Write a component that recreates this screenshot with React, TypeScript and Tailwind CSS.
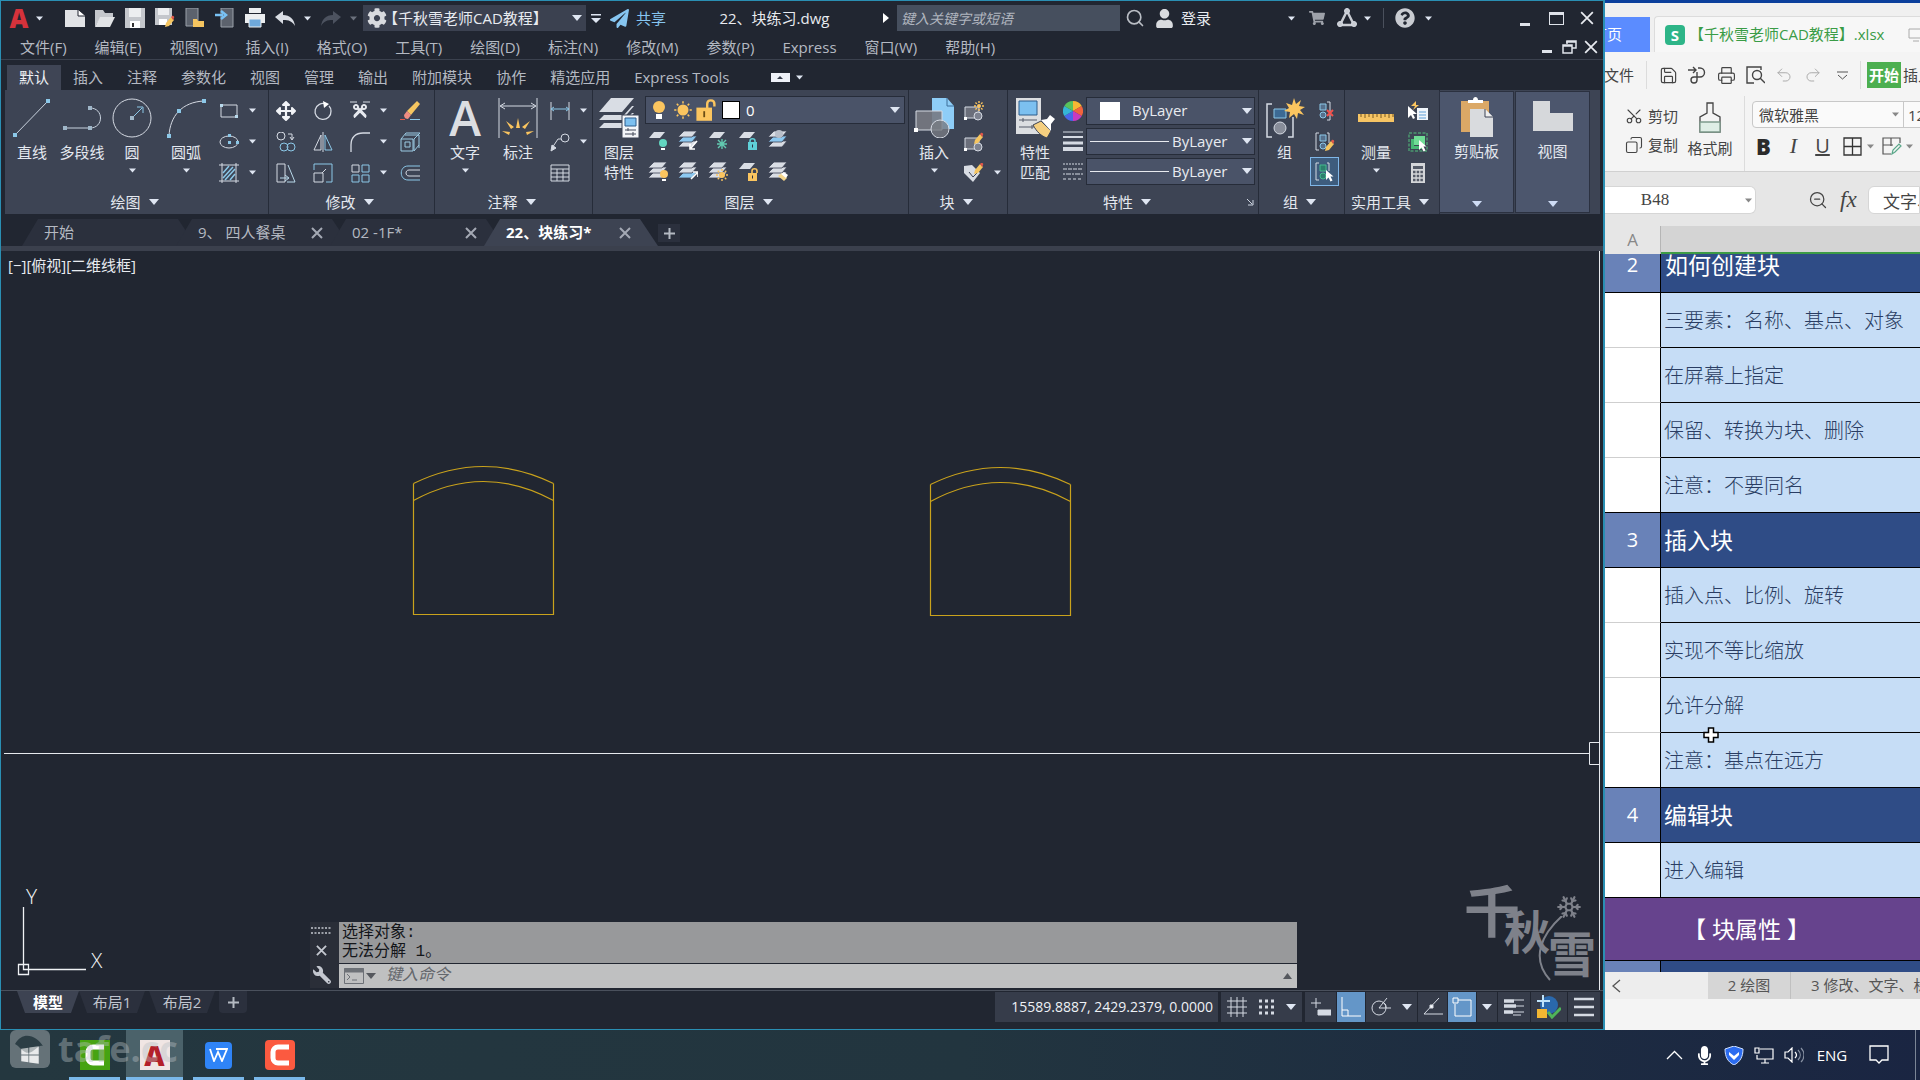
import React from 'react';
import {
  FaCog,
  FaUser,
  FaPaperPlane,
  FaQuestionCircle,
  FaWindows,
  FaShoppingCart,
  FaWrench,
  FaMicrophone,
  FaArrowsAlt,
  FaCut,
} from 'react-icons/fa';
import { Scissors, Copy, Undo2, Redo2, Search, ZoomOut, Snowflake, Printer, Save } from 'lucide-react';

interface IconProps {
  size?: number;
  box?: number;
  children: React.ReactNode;
}

const Icon: React.FC<IconProps> = ({ size = 20, box = 20, children }) => (
  <svg width={size} height={size} viewBox={`0 0 ${box} ${box}`} fill="none" stroke="#d5dae3" strokeWidth={1} aria-hidden="true">
    {children}
  </svg>
);

const Caret: React.FC<{ big?: boolean; color?: string }> = ({ big, color = '#dfe6f2' }) => (
  <svg className="shrink-0" width={big ? 10 : 7} height={big ? 6 : 5} viewBox="0 0 10 6" aria-hidden="true">
    <path d="M0 0h10L5 6z" fill={color} />
  </svg>
);

const Cross: React.FC<{ size?: number; color?: string; width?: number }> = ({ size = 12, color = '#a4a9b4', width = 2 }) => (
  <svg width={size} height={size} viewBox="0 0 12 12" aria-hidden="true">
    <path d="M1 1l10 10M11 1L1 11" stroke={color} strokeWidth={width} />
  </svg>
);

const Pencil = () => (
  <g stroke="none">
    <path d="M10 19l1-4 5-6 3 3-5 6z" fill="#f5c560" />
    <path d="M16 9l1-1c1-1 3 1 2 2l-1 2z" fill="#e0574a" />
  </g>
);

const Sun: React.FC<{ x: number; y: number; r: number }> = ({ x, y, r }) => (
  <g transform={`translate(${x} ${y})`}>
    <circle r={r} fill="#fbc55f" stroke="none" />
    {[0, 45, 90, 135, 180, 225, 270, 315].map((a) => (
      <path key={a} d={`M0 ${-r - 1}V${-r - 3}`} transform={`rotate(${a})`} stroke="#fbc55f" strokeWidth={1.4} />
    ))}
  </g>
);

const Lock: React.FC<{ color: string; open?: boolean }> = ({ color, open }) => (
  <g>
    <path d={open ? 'M14 13v-3c0-3 5-3 5 0v2' : 'M12 13v-2c0-3 5-3 5 0v2'} stroke={color} strokeWidth={1.6} />
    <path d="M10 12h9v8h-9z" fill={color} stroke="none" />
    <path d="M14.500 14.500v3" stroke="#2b3140" />
  </g>
);

const Sheet = ({ fill = '#d9dde4' }) => <path d="M1 8l5-6h11l-5 6z" fill={fill} stroke="none" />;

const Sheets: React.FC<{ mid?: string; last?: string }> = ({ mid = '#d9dde4', last = '#d9dde4' }) => (
  <g stroke="#3c4354" strokeWidth={0.8}>
    <path d="M0 17l6-6h13l-5 6z" fill={last} />
    <path d="M0 12l6-6h13l-5 6z" fill={mid} />
    <path d="M0 7l6-6h13l-5 6z" fill="#d9dde4" />
  </g>
);

const Cursor = () => <path d="M11 8v10l2.500-2.500 2 4 2-1-2-4h3z" fill="#fff" stroke="none" />;

const DRAW_SMALL = [
  <Icon key="rect"><path d="M2 4h16v12H2z" /><path d="M1 3h3v3H1zM16 14h3v3h-3z" fill="#b8d9ec" stroke="none" /></Icon>,
  <Icon key="ellipse"><ellipse cx="10" cy="10" rx="9" ry="6" /><path d="M9 9h3v3H9zM9 2h3v3H9zM17 9h3v3h-3z" fill="#8cc8e8" stroke="none" /></Icon>,
  <Icon key="hatch"><path d="M3 0v20M17 0v20M0 2h20M0 18h20" /><path d="M4 10l6-7M4 15L14 4M6 17L16 6M11 17l5-6" stroke="#8cc8e8" strokeWidth={1.5} /></Icon>,
];

const MODIFY_SMALL = [
  <FaArrowsAlt key="move" size={20} color="#f1f3f7" />,
  <Icon key="rotate"><path d="M13 3a8 8 0 1 0 5 7c0-2-1-4-2-5" strokeWidth={1.3} /><path d="M10 0l6 3-5 4z" fill="#fff" stroke="none" /></Icon>,
  <Icon key="trim"><path d="M0 1h7M13 1h7" /><g transform="translate(18 2) rotate(90)"><FaCut size={16} color="#e6e9ef" /></g></Icon>,
  <Icon key="erase"><path d="M0 18.500h5" stroke="#e0574a" /><path d="M10 18.500h10" stroke="#8cc8e8" /><path d="M7 10L17 0l3 3-9 11z" fill="#f5c560" stroke="none" /><path d="M7 10l4 4-3 4c-2 0-4-1-4-4z" fill="#f08d82" stroke="none" /></Icon>,
  <Icon key="copy"><circle cx="5" cy="4" r="4" /><path d="M12 2h4v5M14 5l2 3 2-3" /><circle cx="8" cy="15" r="4" stroke="#8cc8e8" /><circle cx="15" cy="15" r="4" stroke="#8cc8e8" /></Icon>,
  <Icon key="mirror"><path d="M8 3v15H1zM10 0v20" /><path d="M12 3v15h7z" stroke="#8cc8e8" /></Icon>,
  <Icon key="fillet"><path d="M1 20v-7C1 5 6 1 13 1h7" strokeWidth={1.3} /></Icon>,
  <Icon key="explode"><path d="M1 7h12v12H1zM5 3h14v13M1 7l5-6h14l-6 6M14 7v12l5-6M5 10h5v5H5z" stroke="#9ccbe4" /></Icon>,
  <Icon key="stretch"><path d="M1 1h8v18H1z" /><path d="M12 2l7 17h-8M4 15h8M9 12l4 3-4 3" stroke="#b9d9ea" /></Icon>,
  <Icon key="scale"><path d="M1 10h9v9H1z" /><path d="M1 7V1h18v18h-6" stroke="#8cc8e8" /><path d="M9 10l4-4" /></Icon>,
  <Icon key="array"><path d="M2 2h7v7H2z" /><path d="M12 2h7v7h-7zM2 12h7v7H2zM12 12h7v7h-7z" stroke="#8cc8e8" /></Icon>,
  <Icon key="offset"><path d="M20 3H8c-9 0-9 14 0 14h12" stroke="#8cc8e8" /><path d="M20 7H9c-4 0-4 6 0 6h11" /></Icon>,
];

const ANNOTATE_SMALL = [
  <Icon key="linear"><path d="M1 1v18M19 1v18" /><path d="M1 8h18M4 6L1 8l3 2M16 6l3 2-3 2" stroke="#8cc8e8" /></Icon>,
  <Icon key="leader"><circle cx="15" cy="6" r="4" /><path d="M11 7H8l-6 9" /><path d="M1 19l1-6 4 3z" fill="#d5dae3" /></Icon>,
  <Icon key="table"><path d="M1 2h18v16H1zM1 6h18M1 10h18M1 14h18M7 6v12M13 6v12" /></Icon>,
];

const LAYER_SMALL = [
  <Icon key="off"><Sheet /><circle cx="15" cy="13" r="4" fill="#62d5c0" stroke="none" /><path d="M13 18h4v2h-4z" fill="#fff" stroke="none" /></Icon>,
  <Icon key="isolate"><Sheets mid="#8cc8f0" last="#d9dde4" /><path d="M19 11l-6 7M12 14v5h5" stroke="#fff" strokeWidth={1.6} /></Icon>,
  <Icon key="freeze"><Sheet /><path d="M14 9v10M9 14h10M10 10l8 8M18 10l-8 8" stroke="#62c9b0" strokeWidth={1.4} /></Icon>,
  <Icon key="lock"><Sheet /><Lock color="#5fd0d8" /></Icon>,
  <Icon key="current"><Sheets mid="#8cc8f0" /><circle cx="11" cy="4" r="4" fill="#b9bfca" stroke="none" /></Icon>,
  <Icon key="on"><Sheets /><circle cx="16" cy="13" r="4" fill="#fbc55f" stroke="none" /><path d="M14 18h4v2h-4z" fill="#fff" stroke="none" /></Icon>,
  <Icon key="unisolate"><Sheets mid="#d9dde4" last="#8cc8f0" /><path d="M13 18l6-6M15 11h5v5" stroke="#fff" strokeWidth={1.6} /></Icon>,
  <Icon key="thaw"><Sheets /><Sun x={14} y={14} r={3} /></Icon>,
  <Icon key="unlock"><Sheet /><Lock color="#fbc55f" open /></Icon>,
  <Icon key="match"><Sheets /><path d="M10 15l4-3 5 5-3 3z" fill="#f5d58a" stroke="none" /><path d="M13 13l3-2 4 3-2 3z" fill="#fff" stroke="none" /></Icon>,
];

const BlockBase = () => (
  <g>
    <path d="M1 6h14v11H1z" fill="#6b6f7b" />
    <circle cx="14" cy="15" r="4" fill="#7d8290" />
    <path d="M0 16h3v3H0z" fill="#fff" stroke="none" />
  </g>
);

const BLOCK_SMALL = [
  <Icon key="create"><BlockBase /><Sun x={15} y={5} r={2} /></Icon>,
  <Icon key="edit"><BlockBase /><g transform="translate(0 -7)"><Pencil /></g></Icon>,
  <Icon key="attr"><path d="M0 3l8-1 8 8-7 9-9-9z" fill="#d9dde4" stroke="none" /><path d="M5 9l4 5 4-4" stroke="#3c4354" /><g transform="translate(0 -8)"><Pencil /></g></Icon>,
];

const GroupBase = ({ fill = '#56708c', line = '#8cc8e8' }) => (
  <g>
    <path d="M5 3h6v6H5z" fill={fill} stroke={line} />
    <circle cx="8" cy="14" r="3" fill={fill} stroke={line} />
  </g>
);

const GROUP_SMALL = [
  <Icon key="ungroup"><GroupBase /><path d="M12 1h3v18h-3" /><path d="M12 9l6 6M18 9l-6 6" stroke="#f0524d" strokeWidth={2} /></Icon>,
  <Icon key="edit"><path d="M4 1H1v17h3M12 1h2v10" /><GroupBase /><Pencil /></Icon>,
  <Icon key="select"><path d="M4 1H1v17h3M12 1h2v8" /><GroupBase fill="#2c7f6d" line="#45b98f" /><Cursor /></Icon>,
];

const UTIL_SMALL = [
  <Icon key="quick"><path d="M9 7h11v12H9z" fill="#f1f6fb" stroke="none" /><path d="M11 11h7M11 14h7M11 17h7" stroke="#5d9fd8" /><path d="M0 5v12l3-3 2 4 2-1-2-4h4z" fill="#fff" stroke="none" /><path d="M8 0L3 5h4L5 9l6-5H8z" fill="#fbc55f" stroke="none" /></Icon>,
  <Icon key="all"><path d="M1 1h18v18H1z" stroke="#52c27d" strokeDasharray="3 1.500" /><path d="M6 4h11v9H6z" fill="#6fdc95" stroke="none" /><path d="M3 7h3v7h8v3H3z" fill="#48b874" stroke="none" /><Cursor /></Icon>,
  <Icon key="calc"><path d="M3 0h14v20H3z" fill="#d4d6d9" stroke="none" /><path d="M5 3h10v3H5z" fill="#555b68" stroke="none" /><path d="M5 9h10M5 13h10M5 17h10" stroke="#555b68" strokeWidth={2.5} strokeDasharray="2.500 1.200" /></Icon>,
];

const LineIcon = () => (
  <Icon size={40} box={40}><path d="M3 37L36 3" stroke="#c9d3df" /><path d="M1 35h4v4H1zM34 1h4v4h-4z" fill="#8cc8e8" stroke="none" /></Icon>
);
const PolylineIcon = () => (
  <Icon size={40} box={40}><path d="M3 30h25c14 0 14-20 0-20" stroke="#c9d3df" /><path d="M1 28h4v4H1zM26 28h4v4h-4zM26 8h4v4h-4z" fill="#9fb6c8" stroke="none" /></Icon>
);
const CircleIcon = () => (
  <Icon size={40} box={40}><circle cx="20" cy="20" r="19" /><path d="M20 20L30 10M25 9h6v6" stroke="#8cc8e8" /><path d="M18 18h4v4h-4z" fill="#9fb6c8" stroke="none" /></Icon>
);
const ArcIcon = () => (
  <Icon size={40} box={40}><path d="M3 38C4 18 16 4 38 3" /><path d="M1 36h4v4H1zM11 11h4v4h-4zM36 1h4v4h-4z" fill="#8cc8e8" stroke="none" /></Icon>
);
const DimIcon = () => (
  <Icon size={40} box={40}>
    <path d="M1 0v40M39 0v40M3 8h34M7 5L2 8l5 3M33 5l5 3-5 3" />
    <path d="M18 30l2-10 2 10zM13 31l-5-8 8 6zM27 31l5-8-8 6zM12 34l-8-1 7 4zM28 34l8-1-7 4z" fill="#fbc55f" stroke="none" />
  </Icon>
);
const LayerPropsIcon = () => (
  <Icon size={40} box={40}>
    <g fill="#d9dde4" stroke="none"><path d="M0 14L12 0h23L23 14z" /><path d="M0 22l5-5h20l8-9h2L23 22z" /><path d="M0 30l5-5h19l9-10h2L23 30z" /></g>
    <path d="M23 17h17v23H23z" fill="#f4f6f9" stroke="#3c4354" /><path d="M26 20h11v8H26z" fill="#7cc0f0" stroke="#2c5c8c" /><path d="M26 32h11M26 36h11M29 30v3M34 34v4" stroke="#444b5a" />
  </Icon>
);
const InsertIcon = () => (
  <Icon size={40} box={40}>
    <path d="M18 0h15l7 8v23H18z" fill="#8ecdf7" stroke="none" /><path d="M33 0v8h7" stroke="#3c6f9a" />
    <path d="M2 13h26v19H2z" fill="#777a82" fillOpacity={0.9} /><circle cx="26" cy="31" r="9" fill="#777a82" fillOpacity={0.8} /><path d="M0 30h4v4H0z" fill="#fff" stroke="none" />
  </Icon>
);
const MatchIcon = () => (
  <Icon size={40} box={40}>
    <path d="M1 0h25v36H1z" fill="#dcdee1" stroke="none" /><path d="M4 3h18v14H4z" fill="#7cc0f0" stroke="#2c5c8c" /><path d="M4 22h18M4 29h18M8 20v4M17 27v4" stroke="#555b68" />
    <path d="M18 27l8-4 10 10-4 7c-6-2-10-6-14-13z" fill="#f5cf80" stroke="#3c4354" /><path d="M26 22l6-1 3-4 5 4-4 5v7z" fill="#fff" stroke="none" />
  </Icon>
);
const GroupIcon = () => (
  <Icon size={40} box={40}>
    <path d="M7 6H2v33h5M23 39h5V19" strokeWidth={1.5} /><path d="M9 11h12v9H9z" fill="#3c6a94" stroke="#8cc8e8" /><circle cx="15" cy="30" r="6" fill="#888d99" />
    <path d="M29 0l2 6 5-4-2 6 6 1-5 3 4 5-6-2-1 6-3-5-5 4 1-6-6-1 5-3-3-5 6 2z" fill="#fbc55f" stroke="none" />
  </Icon>
);
const RulerIcon = () => (
  <Icon size={40} box={40}><path d="M2 16h36v8H2z" fill="#f7c564" stroke="none" /><path d="M5 16v3M9 16v4M13 16v3M17 16v4M21 16v3M25 16v4M29 16v3M33 16v4M37 16v3" stroke="#7a5a20" /></Icon>
);
const ClipboardIcon = () => (
  <Icon size={40} box={40}>
    <path d="M4 4h28v31H4z" fill="#dba866" stroke="none" /><path d="M11 5V3h5c0-4 5-4 5 0h5v3H11z" fill="#fff" stroke="none" /><path d="M13 12h15l8 8v20H13z" fill="#d9dbde" stroke="none" /><path d="M28 12v8h8" fill="#eee" stroke="#3c4354" />
  </Icon>
);
const ViewIcon = () => (
  <Icon size={40} box={40}><path d="M0 4h17v12h23v18H0z" fill="#d6d8db" stroke="none" /></Icon>
);

const TextIcon = () => <span className="text-[48px] leading-10 font-semibold text-[#dcdee2]">A</span>;

interface BigButtonProps {
  icon: React.ReactNode;
  lines: string[];
  className: string;
  caret?: boolean;
}

const BigButton: React.FC<BigButtonProps> = ({ icon, lines, className, caret }) => (
  <button className={`flex flex-col items-center pt-2 text-[15px] leading-5 text-[#e4e8ef] ${className}`}>
    <span className="h-10">{icon}</span>
    <span className="mt-1">
      {lines.map((line) => (
        <span key={line} className="block whitespace-nowrap">{line}</span>
      ))}
    </span>
    {caret && <span className="mt-0.5 flex h-3 items-center"><Caret /></span>}
  </button>
);

interface PanelProps {
  title: string;
  className: string;
  launcher?: boolean;
  children: React.ReactNode;
}

const Panel: React.FC<PanelProps> = ({ title, className, launcher, children }) => (
  <section className={`flex flex-col border-r border-[#262c39] ${className}`}>
    <div className="flex h-[100px]">{children}</div>
    <div className="flex h-6 items-center pr-1">
      <button className="flex flex-1 items-center justify-center gap-2 whitespace-nowrap text-[15px] leading-6 text-[#e4e8ef]">
        {title}
        <Caret big />
      </button>
      {launcher && (
        <button aria-label="特性设置">
          <svg width="8" height="8" viewBox="0 0 8 8"><path d="M1 1l5 5M7 2v5H2" stroke="#cfd6e2" fill="none" /></svg>
        </button>
      )}
    </div>
  </section>
);

interface IconGridProps {
  icons: React.ReactNode[];
  label: string;
  carets?: number[];
}

// one column of small tools; carets lists the rows that open a flyout
const IconColumn: React.FC<IconGridProps> = ({ icons, label, carets = [] }) => (
  <div className="flex flex-col pt-[5px]">
    {icons.map((icon, i) => (
      <div key={i} className="flex h-[31px] items-center">
        <button aria-label={`${label} ${i + 1}`} className="flex w-[30px] items-center justify-center">{icon}</button>
        {carets.includes(i) && <span className="flex w-4 justify-center"><Caret /></span>}
      </div>
    ))}
  </div>
);

const MENUS = ['文件(F)', '编辑(E)', '视图(V)', '插入(I)', '格式(O)', '工具(T)', '绘图(D)', '标注(N)', '修改(M)', '参数(P)', 'Express', '窗口(W)', '帮助(H)'];
const RIBBON_TABS = ['默认', '插入', '注释', '参数化', '视图', '管理', '输出', '附加模块', '协作', '精选应用', 'Express Tools'];
const DOC_TABS = ['开始', '9、 四人餐桌', '02 -1F*', '22、块练习*'];

const FileIcons = [
  <Icon key="new"><path d="M0 2h13l7 6v11H0z" fill="#e1e3e6" stroke="none" /><path d="M13 2v6h7" fill="#fff" stroke="#222733" /></Icon>,
  <Icon key="open"><path d="M0 19V2h8l2 3h8v4H6z" fill="#c4c7cc" stroke="none" /><path d="M5 9h15l-5 10H0z" fill="#e1e3e6" stroke="none" /></Icon>,
  <Icon key="save"><path d="M0 0h20v20H0z" fill="#c4c7cc" stroke="none" /><path d="M4 0h12v9H4z" fill="#eceef0" stroke="none" /><path d="M5 13h10v7H5z" fill="#fff" stroke="none" /><path d="M7 15h2v4H7z" fill="#333" stroke="none" /></Icon>,
  <Icon key="saveas"><path d="M0 0h17v17H0z" fill="#c4c7cc" stroke="none" /><path d="M3 0h11v7H3z" fill="#eceef0" stroke="none" /><path d="M4 11h8v6H4z" fill="#fff" stroke="none" /><Pencil /></Icon>,
  <Icon key="web"><path d="M1 0h12v18H1z" fill="#5c626d" stroke="#9aa0aa" /><path d="M8 11h4l1 2h6v6H8z" fill="#f5c560" stroke="none" /></Icon>,
  <Icon key="mobile"><path d="M6 0h12v19H6z" fill="#5c626d" stroke="#9aa0aa" /><path d="M0 7h8M6 3l5 4-5 4" stroke="#79c2f5" strokeWidth={2.5} /></Icon>,
  <Icon key="print"><path d="M4 0h12v5H4zM0 6h20v9H0z" fill="#eceef0" stroke="none" /><path d="M4 11h12v8H4z" fill="#6fa9db" stroke="#eceef0" /></Icon>,
];

const TitleBar = () => (
  <header className="flex h-[34px] items-center text-[15px] text-[#e8ebf0]">
    <button className="ml-1 flex w-7 justify-center text-[26px] leading-7 font-black text-[#d5323b]">A</button>
    <span className="mr-[15px] flex w-3 justify-center"><Caret /></span>
    {FileIcons.map((icon, i) => (
      <button key={i} aria-label={`快速访问 ${i + 1}`} className="flex w-[30px] justify-center">{icon}</button>
    ))}
    <button aria-label="放弃" className="flex w-[30px] justify-center">
      <Icon><path d="M0 9l8-6v4c7 0 11 4 12 11-3-5-6-6-12-6v4z" fill="#d9dde4" stroke="none" /></Icon>
    </button>
    <span className="flex w-[15px] justify-center"><Caret /></span>
    <button aria-label="重做" className="flex w-8 justify-center">
      <Icon><path d="M20 9l-8-6v4C5 7 1 11 0 18c3-5 6-6 12-6v4z" fill="#4c525f" stroke="none" /></Icon>
    </button>
    <span className="mr-1 flex w-3 justify-center"><Caret color="#6b717d" /></span>
    <div className="flex h-[26px] w-[223px] items-center bg-[#3b4150] pl-1 pr-1">
      <FaCog size={20} color="#d9dbdf" />
      <select aria-label="工作空间" className="-ml-1 min-w-0 flex-1 appearance-none bg-transparent outline-none">
        <option>【千秋雪老师CAD教程】</option>
      </select>
      <Caret big />
    </div>
    <button aria-label="自定义" className="flex w-5 justify-center">
      <svg width="10" height="9" viewBox="0 0 10 9"><path d="M0 0h10v1.500H0zM0 4h10L5 9z" fill="#dfe6f2" /></svg>
    </button>
    <button className="flex items-center gap-[7px] whitespace-nowrap pl-1 text-[#86c5f0]">
      <FaPaperPlane size={19} />
      共享
    </button>
    <h1 className="flex-1 whitespace-nowrap text-center">22、块练习.dwg</h1>
    <svg className="mr-2" width="6" height="10" viewBox="0 0 6 10"><path d="M0 0l6 5-6 5z" fill="#fff" /></svg>
    <input aria-label="搜索" placeholder="键入关键字或短语" className="h-[26px] w-[223px] bg-[#464f5e] pl-1 text-[14px] italic outline-none placeholder:text-[#b0b5bf]" />
    <button aria-label="查找" className="flex w-[30px] justify-center"><Search size={20} color="#b9bdc4" /></button>
    <button className="mr-[71px] flex items-center gap-[7px] whitespace-nowrap pl-[5px]">
      <FaUser size={19} color="#d9dbdf" />
      登录
    </button>
    <span className="flex w-[18px] justify-center"><Caret /></span>
    <button aria-label="商店" className="flex w-[34px] justify-center"><FaShoppingCart size={16} color="#9da1a9" /></button>
    <button aria-label="Autodesk" className="flex w-[26px] justify-center">
      <Icon><path d="M10 3l7 14H3z" stroke="#c9ccd2" strokeWidth={2.5} /><circle cx="10" cy="3" r="2.500" fill="#c9ccd2" /><circle cx="3" cy="16" r="2.500" fill="#c9ccd2" /><circle cx="17" cy="16" r="2.500" fill="#c9ccd2" /></Icon>
    </button>
    <span className="flex w-[14px] justify-center"><Caret /></span>
    <span className="mx-[9px] h-5 w-px bg-[#4a505c]" />
    <button aria-label="帮助" className="flex w-6 justify-center"><FaQuestionCircle size={20} color="#c9ccd2" /></button>
    <span className="mr-[70px] flex w-[22px] justify-center"><Caret /></span>
    <button aria-label="最小化" className="flex h-4 w-8 items-end justify-center"><span className="h-[3px] w-[10px] bg-[#dfe3ea]" /></button>
    <button aria-label="最大化" className="flex w-[30px] justify-center"><span className="h-[13px] w-[15px] border border-t-[3px] border-[#dfe3ea]" /></button>
    <button aria-label="关闭" className="flex w-8 justify-center"><Cross size={14} color="#e8ebf0" width={1.5} /></button>
  </header>
);

const MenuBar = () => (
  <nav className="flex h-[25px] items-center border-b border-[#3b414e] pl-[19px] text-[15px] leading-5 text-[#b4b9c2]">
    <div className="flex flex-1 gap-[28px] whitespace-nowrap">
      {MENUS.map((menu) => (
        <button key={menu}>{menu}</button>
      ))}
    </div>
    <button aria-label="最小化图纸" className="flex h-3 w-6 items-end justify-center"><span className="h-[3px] w-[10px] bg-[#dfe3ea]" /></button>
    <button aria-label="还原图纸" className="flex w-5 justify-center">
      <svg width="15" height="14" viewBox="0 0 15 14" fill="none" stroke="#dfe3ea" strokeWidth={1.5}><path d="M5 4V1h9v7h-4M4 2h10" /><path d="M1 5h9v8H1zM1 6h9" /></svg>
    </button>
    <button aria-label="关闭图纸" className="flex w-6 justify-center"><Cross size={14} color="#e8ebf0" width={1.5} /></button>
  </nav>
);

const RibbonTabs = () => (
  <div className="flex h-[30px] items-end pl-[6px] text-[15px] leading-[25px] text-[#b4b9c2]">
    {RIBBON_TABS.map((tab, i) => (
      <button key={tab} className={i === 0 ? 'bg-[#3f4555] px-3 text-[#f0f2f6]' : 'whitespace-nowrap px-3'}>{tab}</button>
    ))}
    <div className="ml-[29px] flex h-[25px] items-center gap-1.5">
      <span className="flex h-[9px] w-[19px] items-center justify-center bg-[#eef1f8]">
        <svg width="6" height="3" viewBox="0 0 6 3"><path d="M0 3h6L3 0z" fill="#333a48" /></svg>
      </span>
      <Caret />
    </div>
  </div>
);

const BYLAYER_ROWS = ['线宽', '线型'];

const Ribbon = () => (
  <div className="mx-1 mr-[3px] flex h-[124px] bg-[#3d4454] pr-2">
    <Panel title="绘图" className="w-[264px]">
      <BigButton icon={<LineIcon />} lines={['直线']} className="ml-px w-[52px]" />
      <BigButton icon={<PolylineIcon />} lines={['多段线']} className="w-12" />
      <BigButton icon={<CircleIcon />} lines={['圆']} className="w-[52px]" caret />
      <BigButton icon={<ArcIcon />} lines={['圆弧']} className="w-[56px]" caret />
      <IconColumn icons={DRAW_SMALL} label="绘图" carets={[0, 1, 2]} />
    </Panel>
    <Panel title="修改" className="w-[166px]">
      <div className="w-0.5" />
      <IconColumn icons={[MODIFY_SMALL[0], MODIFY_SMALL[4], MODIFY_SMALL[8]]} label="移动" />
      <div className="w-[7px]" />
      <IconColumn icons={[MODIFY_SMALL[1], MODIFY_SMALL[5], MODIFY_SMALL[9]]} label="旋转" />
      <div className="w-[7px]" />
      <IconColumn icons={[MODIFY_SMALL[2], MODIFY_SMALL[6], MODIFY_SMALL[10]]} label="修剪" carets={[0, 1, 2]} />
      <div className="w-1" />
      <IconColumn icons={[MODIFY_SMALL[3], MODIFY_SMALL[7], MODIFY_SMALL[11]]} label="删除" />
    </Panel>
    <Panel title="注释" className="w-[158px]">
      <BigButton icon={<TextIcon />} lines={['文字']} className="ml-1 w-[52px]" caret />
      <BigButton icon={<DimIcon />} lines={['标注']} className="w-[54px]" />
      <IconColumn icons={ANNOTATE_SMALL} label="注释" carets={[0, 1]} />
    </Panel>
    <Panel title="图层" className="min-w-0 flex-1">
      <BigButton icon={<LayerPropsIcon />} lines={['图层', '特性']} className="w-[52px]" />
      <div className="min-w-0 flex-1 pr-[3px] pt-1.5">
        <div className="flex h-[28px] items-center border border-[#262c39] bg-[#4a5368] pl-[6px] pr-1">
          <Icon><circle cx="7" cy="7" r="6" fill="#fbc55f" stroke="none" /><path d="M4 14h6v5H4z" fill="#fff" stroke="none" /></Icon>
          <Icon size={22}><Sun x={10} y={10} r={5} /></Icon>
          <Icon size={24}><path d="M11 9V5c0-4 6-4 6 0v2" stroke="#fbc55f" strokeWidth={2} /><path d="M2 8h13v11H2z" fill="#fbc55f" stroke="none" /><path d="M8.500 11v5" stroke="#6a4d15" strokeWidth={1.5} /></Icon>
          <span className="ml-1 h-[18px] w-[18px] border border-black bg-white" />
          <select aria-label="图层" className="ml-1.5 min-w-0 flex-1 appearance-none bg-transparent text-[15px] text-white outline-none">
            <option>0</option>
          </select>
          <Caret big />
        </div>
        <div className="-ml-0.5 grid w-[150px] grid-cols-5">
          {LAYER_SMALL.map((icon, i) => (
            <button key={i} aria-label={`图层工具 ${i + 1}`} className="flex h-[31px] items-center justify-center">{icon}</button>
          ))}
        </div>
      </div>
    </Panel>
    <Panel title="块" className="w-[99px]">
      <BigButton icon={<InsertIcon />} lines={['插入']} className="w-[50px]" caret />
      <IconColumn icons={BLOCK_SMALL} label="块" carets={[2]} />
    </Panel>
    <Panel title="特性" className="w-[251px]" launcher>
      <BigButton icon={<MatchIcon />} lines={['特性', '匹配']} className="ml-0.5 w-[50px]" />
      <div className="flex flex-1 flex-col pr-[3px] pt-[5px]">
        <div className="flex h-[31px] items-center">
          <span className="flex w-[26px] justify-center">
            <Icon>
              <g stroke="none">
                <path d="M10 10V0a10 10 0 0 1 8.700 5z" fill="#f7b733" /><path d="M10 10l8.700-5a10 10 0 0 1 0 10z" fill="#f2643d" /><path d="M10 10l8.700 5A10 10 0 0 1 10 20z" fill="#c93ac0" />
                <path d="M10 10v10a10 10 0 0 1-8.700-5z" fill="#4a67e8" /><path d="M10 10l-8.700 5a10 10 0 0 1 0-10z" fill="#35b5d6" /><path d="M10 10L1.300 5A10 10 0 0 1 10 0z" fill="#58c25c" />
              </g>
            </Icon>
          </span>
          <div className="flex h-[28px] flex-1 items-center border border-[#262c39] bg-[#4a5368] pl-[13px] pr-[2px]">
            <span className="h-[18px] w-[20px] bg-white" />
            <select aria-label="对象颜色" className="ml-3 min-w-0 flex-1 appearance-none bg-transparent text-[15px] text-[#e8ebf0] outline-none">
              <option>ByLayer</option>
            </select>
            <Caret big />
          </div>
        </div>
        {BYLAYER_ROWS.map((row, i) => (
          <div key={row} className="flex h-[30px] items-center">
            <span className="flex w-[26px] justify-center">
              {i === 0 ? (
                <Icon><path d="M0 1h20" /><path d="M0 6h20" strokeWidth={2} /><path d="M0 12h20" strokeWidth={3} /><path d="M0 18h20" strokeWidth={4} /></Icon>
              ) : (
                <Icon><path d="M0 3h20" strokeDasharray="2 1" /><path d="M0 8h20" strokeDasharray="4 1" /><path d="M0 13h20" strokeDasharray="2 1 5 1" /><path d="M0 18h20" strokeDasharray="3 2" /></Icon>
              )}
            </span>
            <div className="flex h-[27px] flex-1 items-center border border-[#262c39] bg-[#4a5368] pl-[3px] pr-[2px]">
              <span className="h-px w-[79px] bg-[#e8ebf0]" />
              <select aria-label={row} className="ml-[3px] min-w-0 flex-1 appearance-none bg-transparent text-[15px] text-[#e8ebf0] outline-none">
                <option>ByLayer</option>
              </select>
              <Caret big />
            </div>
          </div>
        ))}
      </div>
    </Panel>
    <Panel title="组" className="w-[86px]">
      <BigButton icon={<GroupIcon />} lines={['组']} className="w-[51px]" />
      <div className="pt-[5px]">
        {GROUP_SMALL.map((icon, i) => (
          <button key={i} aria-label={`组 ${i + 1}`} className={i === 2 ? 'flex h-[29px] w-[29px] items-center justify-center border border-[#7fb6e8] bg-[#3e5c7d]' : 'flex h-[31px] w-[29px] items-center justify-center'}>{icon}</button>
        ))}
      </div>
    </Panel>
    <Panel title="实用工具" className="w-[95px]">
      <BigButton icon={<RulerIcon />} lines={['测量']} className="ml-1 w-[54px]" caret />
      <IconColumn icons={UTIL_SMALL} label="实用工具" />
    </Panel>
    {[
      { label: '剪贴板', icon: <ClipboardIcon /> },
      { label: '视图', icon: <ViewIcon /> },
    ].map((item) => (
      <button key={item.label} className="my-[2px] mr-[3px] flex w-[73px] flex-col items-center bg-[#4c566d] pt-[5px] text-[15px] leading-5 text-[#e4e8ef] outline outline-[#2b3140]">
        {item.icon}
        <span className="mt-1 flex-1">{item.label}</span>
        <span className="pb-[5px]"><Caret big color="#cfdcf5" /></span>
      </button>
    ))}
  </div>
);

const DocTabs = () => (
  <div className="flex h-[37px] items-end border-b-[5px] border-[#3b404d] pl-[21px] text-[15px] leading-[27px] text-[#b4b9c2]">
    {DOC_TABS.map((tab, i) => (
      <div
        key={tab}
        className={
          i === 3
            ? 'z-10 flex h-[27px] w-[174px] items-center justify-between bg-[#3d4352] pl-[22px] pr-[27px] font-bold text-white [clip-path:polygon(16px_0,calc(100%-18px)_0,100%_100%,0_100%)]'
            : '-mr-5 flex h-[27px] w-[174px] items-center justify-between bg-[#2b303d] pl-[22px] pr-[27px] [clip-path:polygon(16px_0,calc(100%-18px)_0,100%_100%,0_100%)]'
        }
      >
        <button className="whitespace-nowrap">{tab}</button>
        {i > 0 && <button aria-label={`关闭 ${tab}`}><Cross /></button>}
      </div>
    ))}
    <button aria-label="新图形" className="mb-1 flex h-[18px] w-[22px] items-center justify-center bg-[#2b303d]">
      <svg width="11" height="11" viewBox="0 0 11 11"><path d="M5.500 0v11M0 5.500h11" stroke="#b4b9c2" strokeWidth={2} /></svg>
    </button>
  </div>
);

const Chair: React.FC<{ x: number; y: number }> = ({ x, y }) => (
  <g transform={`translate(${x} ${y})`} fill="none" stroke="#c9a21c" strokeWidth={1.2}>
    <path d="M0 17v131h140V17" />
    <path d="M0 17Q70 -17 140 17" />
    <path d="M0 34Q70 -4 140 34" />
  </g>
);

const CommandLine = () => (
  <div className="absolute bottom-0.5 left-[309px] right-[303px] flex h-[66px]">
    <div className="flex w-[29px] flex-col items-center justify-between bg-[#2a2e38] pb-1 pr-1.5 pt-[5px]">
      <svg width="21" height="7" viewBox="0 0 21 7"><path d="M0 1h21M0 6h21" stroke="#9da1a9" strokeWidth={2} strokeDasharray="2 1.500" /></svg>
      <button aria-label="关闭命令行"><Cross color="#c4c8d0" size={11} /></button>
      <button aria-label="命令行设置"><FaWrench size={18} color="#c4c8d0" className="-scale-x-100" /></button>
    </div>
    <div className="flex flex-1 flex-col font-['Liberation_Mono','Noto_Sans_CJK_SC',monospace] text-[16px]">
      <div className="h-[41px] overflow-hidden bg-[#98999b] pl-[3px] pt-0.5 leading-[19px] text-[#14161a]">
        <p>选择对象:</p>
        <p>无法分解 1。</p>
      </div>
      <div className="mt-px flex h-6 items-center bg-[#bfc0c1] pl-[5px] pr-[5px]">
        <svg width="20" height="16" viewBox="0 0 20 16" fill="none" stroke="#6d7177"><path d="M.5 .5h19v15H.5z" /><path d="M0 2.500h20" strokeWidth={4} /><path d="M3 6l3 3-3 3M8 12h5" /></svg>
        <span className="ml-[2px] mr-2.5"><Caret big color="#55585e" /></span>
        <input aria-label="命令" placeholder="键入命令" className="h-6 flex-1 bg-transparent italic outline-none placeholder:text-[#64676c]" />
        <svg width="9" height="6" viewBox="0 0 9 6"><path d="M0 6h9L4.500 0z" fill="#55585e" /></svg>
      </div>
    </div>
  </div>
);

const Canvas = () => (
  <main className="relative min-h-0 flex-1 overflow-hidden border-r-[3px] border-[#212631] bg-[#212631]">
    <div className="h-full border-r border-[#e6e9ee]">
      <svg className="absolute inset-0 h-full w-full" aria-label="图形区">
        <Chair x={412.5} y={215.5} />
        <Chair x={929.5} y={216.5} />
        <path d="M3 502.500H1588" stroke="#e6e9ee" />
        <path d="M1600 491.500h-11.500v22H1600" stroke="#e6e9ee" fill="none" />
      </svg>
      <p className="pl-[7px] pt-1 text-[15px] leading-5 text-[#e8ebf0]">[−][俯视][二维线框]</p>
    </div>
    <svg className="absolute bottom-[9px] left-4" width="100" height="108" viewBox="0 0 100 108" stroke="#f0f2f5" fill="none">
      <path d="M6.500 34v62.500H69M1.500 91.500h10v10h-10z" strokeWidth={1.3} />
      <text x="9" y="31" fontSize="21" fontWeight="300" stroke="none" fill="#f0f2f5">Y</text>
      <text x="74" y="95" fontSize="21" fontWeight="300" stroke="none" fill="#f0f2f5">X</text>
    </svg>
    <CommandLine />
    <div className="absolute bottom-[4px] right-[2px] h-[104px] w-[134px] font-bold text-[#7e818a]" aria-label="千秋雪">
      <span className="absolute left-0 top-0 text-[56px] leading-[56px]">千</span>
      <span className="absolute left-[40px] top-[26px] text-[46px] leading-[46px]">秋</span>
      <span className="absolute left-[84px] top-[48px] text-[48px] leading-[48px]">雪</span>
      <Snowflake className="absolute left-[92px] top-[12px]" size={26} />
      <svg className="absolute left-[70px] top-[34px]" width="30" height="66" viewBox="0 0 30 66" fill="none" stroke="#7e818a" strokeWidth={2}><path d="M28 0C8 18 -4 42 16 64" /></svg>
    </div>
  </main>
);

const LAYOUT_TABS = ['模型', '布局1', '布局2'];

const StatusBar = () => (
  <footer className="flex h-[39px] justify-between border-t border-[#4a505c] text-[15px] leading-[22px]">
    <div className="flex h-[22px] pl-4 leading-5 text-[#c0c5ce]">
      {LAYOUT_TABS.map((tab, i) => (
        <button
          key={tab}
          className={
            i === 0
              ? 'w-[62px] bg-[#3d4352] font-bold text-white [clip-path:polygon(0_0,100%_0,calc(100%-8px)_100%,8px_100%)]'
              : 'mr-1 w-[66px] bg-[#2b303d] [clip-path:polygon(0_0,100%_0,calc(100%-8px)_100%,8px_100%)]'
          }
        >
          {tab}
        </button>
      ))}
      <button aria-label="新建布局" className="flex w-7 items-center justify-center rounded-b bg-[#2b303d]">
        <svg width="11" height="11" viewBox="0 0 11 11"><path d="M5.500 0v11M0 5.500h11" stroke="#b4b9c2" strokeWidth={2} /></svg>
      </button>
    </div>
    <div className="mr-[3px] mt-px flex h-[30px] items-stretch gap-px">
      <span className="mr-0.5 flex w-[223px] items-center justify-end bg-[#363c4a] pr-[5px] text-[14px] text-[#eef1f6]">15589.8887, 2429.2379, 0.0000</span>
      <div className="mr-0.5 flex w-[81px] items-center justify-between bg-[#363c4a] pl-1.5 pr-1.5">
        <button aria-label="栅格"><Icon><path d="M4 0v20M10 0v20M16 0v20M0 4h20M0 10h20M0 16h20" /></Icon></button>
        <button aria-label="捕捉"><Icon><path d="M2 4h18M2 10h18M2 16h18" strokeWidth={3} strokeDasharray="3 3" /></Icon></button>
        <Caret big />
      </div>
      <button aria-label="动态输入" className="flex w-[31px] items-center justify-center bg-[#363c4a]"><Icon><path d="M5 1v10M0 6h10" /><path d="M7 13h13v5H7z" fill="#d5dae3" /></Icon></button>
      <button aria-label="正交" className="flex w-[28px] items-center justify-center bg-[#6496c8]"><Icon><path d="M1 0v19h19M1 13h6v6" stroke="#fff" /></Icon></button>
      <div className="flex w-[51px] items-center justify-between bg-[#363c4a] px-[5px]">
        <button aria-label="极轴"><Icon><circle cx="8" cy="11" r="7" /><path d="M20 11H8l8-10M13 6c2 1 2 3 2 5" /></Icon></button>
        <Caret big />
      </div>
      <button aria-label="对象追踪" className="flex w-[29px] items-center justify-center bg-[#363c4a]"><Icon><path d="M16 1L1 17h19" /><path d="M7 8h3v3H7z" fill="#fff" /></Icon></button>
      <button aria-label="对象捕捉" className="flex w-[28px] items-center justify-center bg-[#6496c8]"><Icon><path d="M6 3h13v16H3V7" stroke="#fff" /><path d="M1 1h5v5H1z" stroke="#fff" /></Icon></button>
      <span className="flex w-5 items-center justify-center bg-[#363c4a]"><Caret big /></span>
      <button aria-label="线宽" className="flex w-8 items-center justify-center bg-[#363c4a]"><Icon><path d="M0 4h10M0 9h12M0 15h9" strokeWidth={3.5} /><path d="M10 3h10M12 9h8M9 15h11M9 18h8" /></Icon></button>
      <button aria-label="图形性能" className="flex w-9 items-center justify-center bg-[#363c4a]">
        <Icon size={24} box={24}><circle cx="12" cy="10" r="9" fill="#2a68ac" stroke="none" /><path d="M6 0v12M0 6h13" stroke="#bfe3fa" strokeWidth={2} /><path d="M0 14h10v9H0z" fill="#f2b632" stroke="none" /><path d="M11 17l4 5 9-9" stroke="#4fb45a" strokeWidth={3} /></Icon>
      </button>
      <button aria-label="自定义" className="flex w-[32px] items-center justify-center bg-[#363c4a]"><Icon><path d="M0 2h20M0 10h20M0 18h20" strokeWidth={2.5} /></Icon></button>
    </div>
  </footer>
);

const CadWindow = () => (
  <div className="flex min-h-0 min-w-0 flex-col overflow-hidden border border-r-2 border-[#2a8fb3] bg-[#212631]">
    <TitleBar />
    <MenuBar />
    <RibbonTabs />
    <Ribbon />
    <DocTabs />
    <Canvas />
    <StatusBar />
  </div>
);

interface SheetRow {
  no?: string;
  text: string;
}

const SHEET_ROWS: SheetRow[] = [
  { text: '三要素：名称、基点、对象' },
  { text: '在屏幕上指定' },
  { text: '保留、转换为块、删除' },
  { text: '注意：不要同名' },
  { no: '3', text: '插入块' },
  { text: '插入点、比例、旋转' },
  { text: '实现不等比缩放' },
  { text: '允许分解' },
  { text: '注意：基点在远方' },
  { no: '4', text: '编辑块' },
  { text: '进入编辑' },
];

const WpsToolbar = () => (
  <div className="flex h-[76px] border-b border-[#d0d0d0] text-[15px] leading-5 text-[#444] [&>*]:shrink-0">
    <div className="flex w-[74px] flex-col justify-between whitespace-nowrap pb-4 pl-5 pt-2.5">
      <button className="flex items-center gap-[5px]"><Scissors size={18} strokeWidth={1.5} className="shrink-0 -rotate-90" />剪切</button>
      <button className="flex items-center gap-[5px]"><Copy size={18} strokeWidth={1.5} className="shrink-0 -scale-x-100" />复制</button>
    </div>
    <button className="ml-[8px] flex w-[46px] flex-col items-center pt-1.5">
      <svg width="24" height="32" viewBox="0 0 24 32" fill="none" stroke="#444" strokeWidth={1.3}><path d="M9 1h6v10l7 4v15H2V15l7-4z" /><path d="M2 20h20v10H2z" fill="#dfeee6" stroke="#7d9a8c" /></svg>
      <span className="mt-1 whitespace-nowrap">格式刷</span>
    </button>
    <div className="ml-[11px] border-l border-[#dcdcdc] pl-[7px] pt-[5px]">
      <div className="flex h-[27px] w-[200px] items-center rounded-sm border border-[#c8c8c8] bg-[#fafafa]">
        <select aria-label="字体" className="w-[134px] appearance-none bg-transparent pl-1.5 outline-none"><option>微软雅黑</option></select>
        <span className="flex w-4 justify-center"><Caret color="#888" /></span>
        <select aria-label="字号" className="h-full w-10 appearance-none border-l border-[#c8c8c8] bg-transparent pl-1 outline-none"><option>12</option></select>
      </div>
      <div className="mt-[6px] flex h-6 items-center">
        <button className="w-[27px] pr-1 text-[22px] leading-6 font-extrabold text-[#2b2b2b]">B</button>
        <button className="w-[29px] font-['Liberation_Serif',serif] text-[22px] leading-6 italic">I</button>
        <button className="w-[29px] text-[20px] leading-6 underline">U</button>
        <button aria-label="边框" className="flex w-[30px] items-center justify-center"><svg width="19" height="19" viewBox="0 0 19 19" fill="none" stroke="#333" strokeWidth={1.3}><path d="M1 1h17v17H1zM9.500 1v17M1 9.500h17" /></svg></button>
        <Caret color="#888" />
        <button aria-label="绘制边框" className="ml-2 mr-1 flex items-center"><svg width="20" height="19" viewBox="0 0 20 19" fill="none" stroke="#555" strokeWidth={1.2}><path d="M18 6V1H1v16h8M1 8h10M9 1v8" /><path d="M10 17l1-4 6-6 2 2-6 6z" stroke="#5aa88a" /></svg></button>
        <Caret color="#888" />
      </div>
    </div>
  </div>
);

const WpsWindow = () => (
  <div className="relative flex min-h-0 min-w-0 flex-col overflow-hidden border-t-[3px] border-[#0b3f9c] bg-[#f4f4f4]">
    <div className="flex h-[49px] items-end whitespace-nowrap bg-[#f0f0f0] text-[15px]">
      <button className="mr-1 flex h-[35px] w-[45px] shrink-0 items-center justify-end bg-[#5b8cff] pr-7 text-white">首页</button>
      <div className="flex h-[36px] flex-1 items-center rounded-tl border-l border-t border-[#dcdcdc] bg-[#f7f7f7] pl-[10px] text-[#3a9c46]">
        <span className="mr-1 flex h-5 w-5 shrink-0 items-center justify-center rounded-sm bg-[#2eb588] font-bold leading-5 text-white">S</span>
        【千秋雪老师CAD教程】.xlsx
        <svg className="ml-6 shrink-0" width="16" height="14" viewBox="0 0 16 14" fill="none" stroke="#aaa"><path d="M1 1h14v9H1zM5 13h6" /></svg>
      </div>
    </div>
    <div className="flex h-[44px] items-center overflow-hidden whitespace-nowrap pt-0.5 text-[15px] text-[#444] [&>*]:shrink-0">
      <button className="-ml-px w-[30px]">文件</button>
      <span className="ml-3 mr-2 h-7 w-px bg-[#dcdcdc]" />
      <button aria-label="保存" className="flex w-[26px] justify-center"><Save size={19} strokeWidth={1.5} /></button>
      <button aria-label="输出" className="ml-[3px] flex w-[26px] justify-center"><svg width="18" height="18" viewBox="0 0 18 18" fill="none" stroke="#444" strokeWidth={1.4}><path d="M0 4h8M5 1l3 3-3 3M10 2h2a4 4 0 0 1 0 9H6a3 3 0 1 0 3 3V6" /></svg></button>
      <button aria-label="打印" className="ml-[3px] flex w-[26px] justify-center"><Printer size={19} strokeWidth={1.5} /></button>
      <button aria-label="打印预览" className="ml-[3px] flex w-[26px] justify-center"><svg width="19" height="18" viewBox="0 0 19 18" fill="none" stroke="#444" strokeWidth={1.4}><path d="M8 17H1V1h14v3" /><circle cx="11" cy="9" r="4.500" /><path d="M14 12l5 5" /></svg></button>
      <button aria-label="撤销" className="ml-[3px] flex w-[26px] justify-center"><Undo2 size={18} strokeWidth={1.3} color="#aaa" /></button>
      <button aria-label="恢复" className="ml-[3px] flex w-[26px] justify-center"><Redo2 size={18} strokeWidth={1.3} color="#aaa" /></button>
      <button aria-label="更多" className="ml-[3px] flex w-[26px] justify-center"><svg width="11" height="9" viewBox="0 0 11 9" fill="none" stroke="#555"><path d="M0 1h11M1 4l4.500 4L10 4" /></svg></button>
      <span className="ml-[5px] mr-1.5 h-7 w-px bg-[#dcdcdc]" />
      <button className="h-[26px] w-[34px] bg-[#4caf50] font-bold leading-[26px] text-white">开始</button>
      <button className="ml-0.5">插入</button>
    </div>
    <WpsToolbar />
    <div className="flex h-[54px] items-center overflow-hidden bg-[#e6e6e6] pt-0.5">
      <div className="flex h-[28px] w-[151px] shrink-0 items-center rounded-r-md border border-l-0 border-[#d6d6d6] bg-white pr-[3px]">
        <input aria-label="名称框" defaultValue="B48" className="w-full min-w-0 bg-transparent pr-10 text-center font-['Liberation_Serif',serif] text-[17px] text-[#444] outline-none" />
        <Caret color="#888" />
      </div>
      <ZoomOut className="ml-[52px] shrink-0" size={20} strokeWidth={1.5} color="#444" />
      <span className="ml-[12px] w-[28px] shrink-0 font-['Liberation_Serif',serif] text-[23px] italic leading-7 text-[#444]">fx</span>
      <input aria-label="编辑栏" defaultValue="文字、标注" className="h-[28px] w-full min-w-0 rounded-l-md border border-[#d6d6d6] bg-white pl-3.5 text-[17px] text-[#444] outline-none" />
    </div>
    <div className="min-h-0 flex-1 overflow-hidden bg-white">
      <table className="w-full table-fixed border-separate border-spacing-0 whitespace-nowrap">
        <thead>
          <tr className="h-[28px] text-[17px] leading-6 text-[#888]">
            <th className="w-[56px] border-r border-[#b5b5b5] bg-[#e6e6e6] font-normal">A</th>
            <th className="border-b-2 border-[#3d9b45] bg-[#d4d4d4]" />
          </tr>
        </thead>
        <tbody>
          <tr className="h-[39px] text-[23px] leading-[22px] text-white">
            <td className="border-b border-r border-black bg-[#6982b8] text-center align-top text-[20px]">2</td>
            <td className="border-b border-black bg-[#2f4c86] pl-1 align-top">如何创建块</td>
          </tr>
          {SHEET_ROWS.map((row, i) =>
            row.no ? (
              <tr key={i} className="h-[55px] text-[23px] leading-8 text-white">
                <td className="border-b border-r border-black bg-[#6982b8] text-center text-[20px]">{row.no}</td>
                <td className="border-b border-black bg-[#2f4c86] pl-[3px]">{row.text}</td>
              </tr>
            ) : (
              <tr key={i} className="h-[55px] text-[20px] leading-7 text-[#2a3d63]">
                <td className={SHEET_ROWS[i + 1] && !SHEET_ROWS[i + 1].no ? 'border-b border-r border-b-[#cfcfcf] border-r-black bg-white' : 'border-b border-r border-black bg-white'} />
                <td className="border-b border-black bg-[#c6ddf6] pl-[3px] pt-px font-light">{row.text}</td>
              </tr>
            )
          )}
          <tr className="h-[63px] text-[23px] leading-8 text-white">
            <td colSpan={2} className="border-b border-black bg-[#66438d] pl-[78px]">【 块属性 】</td>
          </tr>
          <tr className="h-[55px]">
            <td className="border-r border-black bg-[#6982b8]" />
            <td className="bg-[#2f4c86]" />
          </tr>
        </tbody>
      </table>
    </div>
    <div className="mb-[31px] flex h-[27px] shrink-0 items-stretch overflow-hidden whitespace-nowrap bg-[#d6d6d6] text-[15px] text-[#555]">
      <button aria-label="上一张" className="w-[103px] shrink-0 bg-[#ededed] pl-[7px]"><svg width="9" height="14" viewBox="0 0 9 14" fill="none" stroke="#555" strokeWidth={1.3}><path d="M8 1L1 7l7 6" /></svg></button>
      <button className="w-[83px] shrink-0 border-r border-[#c0c0c0]">2 绘图</button>
      <button className="shrink-0 pl-5">3 修改、文字、标注</button>
    </div>
    <svg className="absolute left-[98px] top-[724px]" width="16" height="16" viewBox="0 0 16 16"><path d="M5.500 1h5v4.500H15v5h-4.500V15h-5v-4.500H1v-5h4.500z" fill="#fff" stroke="#000" strokeWidth={1.5} /></svg>
  </div>
);

const CamtasiaLogo = () => (
  <svg width="20" height="22" viewBox="0 0 20 22" fill="none" stroke="#fff" strokeWidth={5}><path d="M19 3H8a5 5 0 0 0-5 5v6a5 5 0 0 0 5 5h11" /></svg>
);

const TASKS = [
  { name: 'Camtasia', cell: 'w-[51px]', tile: 'bg-[#46a312] h-[30px] w-[30px]', logo: <CamtasiaLogo /> },
  { name: 'AutoCAD', cell: '-ml-1 w-[57px] bg-[#4b626a]', tile: 'bg-[#f0e6e4] h-[30px] w-[30px]', logo: <span className="text-[28px] leading-7 font-black text-[#b3202a]">A</span> },
  { name: 'WPS', cell: 'w-[51px]', tile: 'bg-[#2f84f7] h-[27px] w-[27px] rounded-sm', logo: <svg width="19" height="14" viewBox="0 0 19 14" fill="none" stroke="#fff" strokeWidth={1.8}><path d="M1 1l4 12 4-9 4 9 5-12H7" /></svg> },
  { name: 'Recorder', cell: 'w-[51px]', tile: 'bg-[#fb5a40] h-[30px] w-[30px] rounded-sm', logo: <CamtasiaLogo /> },
];

const Taskbar = () => (
  <div className="relative flex h-[50px] shrink-0 items-stretch bg-gradient-to-r from-[#24373f] via-[#22353f] to-[#1a2542]">
    <div className="absolute left-[10px] top-0 z-10 flex items-center gap-2 opacity-40">
      <svg width="40" height="38" viewBox="0 0 40 38"><rect width="40" height="38" rx="6" fill="#c8cccf" /><path d="M5 14c8-14 22-8 28 2-6-2-10 10-18 6-4-2-6-6-10-8z" fill="#3a4a50" /></svg>
      <span className="text-[36px] font-bold leading-[38px] text-[#b9c0c4]">tafe.cc</span>
    </div>
    <button aria-label="开始" className="flex w-[60px] items-center justify-center"><FaWindows size={20} color="#fff" /></button>
    <div className="flex gap-[10px] pl-[9px]">
      {TASKS.map((task) => (
        <button key={task.name} aria-label={task.name} className={`flex items-center justify-center border-b-[3px] border-[#7ab8ea] pt-[3px] ${task.cell}`}>
          <span className={`flex items-center justify-center ${task.tile}`}>{task.logo}</span>
        </button>
      ))}
    </div>
    <div className="ml-auto flex items-center text-[15px] text-white">
      <button aria-label="显示隐藏的图标" className="flex w-[30px] justify-center"><svg width="17" height="10" viewBox="0 0 17 10" fill="none" stroke="#fff" strokeWidth={1.3}><path d="M1 9l7.500-7.500L16 9" /></svg></button>
      <span className="flex w-[30px] justify-center"><FaMicrophone size={19} /></span>
      <span className="flex w-[30px] justify-center"><svg width="20" height="19" viewBox="0 0 20 19"><path d="M10 0l9 3c0 8-3 13-9 16C4 16 1 11 1 3z" fill="#2c6cf0" stroke="#cfe0ff" /><path d="M5 6l5 4 5-4v3l-5 5-5-5z" fill="#fff" /></svg></span>
      <span className="flex w-[30px] justify-center"><svg width="20" height="17" viewBox="0 0 20 17" fill="none" stroke="#fff" strokeWidth={1.2}><path d="M6 2h13v10H3V8M11 12v4M7 16h8M1 1h4v5H1z" /></svg></span>
      <span className="flex w-[30px] justify-center"><svg width="20" height="16" viewBox="0 0 20 16" fill="none" stroke="#fff" strokeWidth={1.2}><path d="M1 5h3l4-4v14l-4-4H1zM11 5c2 2 2 4 0 6" /><path d="M14 3c3 3 3 7 0 10M17 1c4 4 4 10 0 14" stroke="#8791a3" /></svg></span>
      <span className="flex w-[46px] justify-center">ENG</span>
      <button aria-label="通知" className="flex w-[48px] justify-center"><svg width="20" height="20" viewBox="0 0 20 20" fill="none" stroke="#fff" strokeWidth={1.3}><path d="M1 1h18v14h-6l-3 3-3-3H1z" /></svg></button>
      <span className="ml-[12px] mr-1 h-[50px] w-px bg-[#7b8596]" />
    </div>
  </div>
);

export default function App() {
  return (
    <div className="flex h-screen min-w-0 flex-col overflow-hidden font-['Open_Sans','Noto_Sans_CJK_SC',sans-serif]">
      <div className="grid min-h-0 flex-1 grid-cols-[107fr_21fr] grid-rows-[minmax(0,1fr)]">
        <CadWindow />
        <WpsWindow />
      </div>
      <Taskbar />
    </div>
  );
}
